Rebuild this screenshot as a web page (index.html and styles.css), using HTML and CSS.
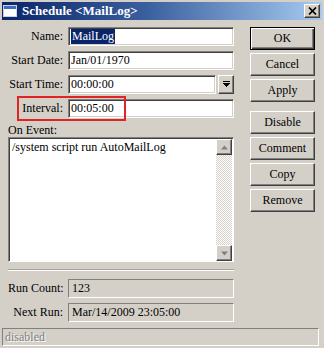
FILE: index.html
```html
<!DOCTYPE html>
<html lang="en">
<head>
    <meta charset="UTF-8">
    <meta name="viewport" content="width=device-width, initial-scale=1.0">
    <title>Schedule</title>
    <link rel="stylesheet" href="styles.css">
</head>
<body>
    <div class="window">
        <div class="titlebar">
            <svg class="title-icon" width="14" height="12" viewBox="0 0 14 12">
                <rect x="0.5" y="0.5" width="13" height="11" fill="#fff" stroke="#c8d4e4"/>
                <rect x="1" y="1" width="12" height="3" fill="#3d6cc0"/>
            </svg>
            <span class="title">Schedule &lt;MailLog&gt;</span>
            <div class="close-btn">
                <svg width="9" height="8" viewBox="0 0 9 8">
                    <path d="M1 0.5 L8 7.5 M8 0.5 L1 7.5" stroke="#000" stroke-width="1.7"/>
                </svg>
            </div>
        </div>

        <div class="main">
            <div class="form">
                <div class="fields">
                    <div class="label">Name:</div>
                    <div class="field"><span class="selected">MailLog</span></div>
                    <div class="label">Start Date:</div>
                    <div class="field">Jan/01/1970</div>
                    <div class="label">Start Time:</div>
                    <div class="combo">
                        <div class="field">00:00:00</div>
                        <div class="drop-btn">
                            <svg width="7" height="7" viewBox="0 0 7 7" shape-rendering="crispEdges">
                                <rect x="0" y="0" width="7" height="1"/>
                                <rect x="0" y="2" width="7" height="1"/>
                                <rect x="1" y="3" width="5" height="1"/>
                                <rect x="2" y="4" width="3" height="1"/>
                                <rect x="3" y="5" width="1" height="1"/>
                            </svg>
                        </div>
                    </div>
                    <div class="label">Interval:</div>
                    <div class="field">00:05:00</div>
                </div>

                <div class="event-label">On Event:</div>
                <div class="event-box">
                    <div class="event-text">/system script run AutoMailLog</div>
                    <div class="scrollbar">
                        <div class="sb-btn">
                            <svg width="7" height="5" viewBox="0 0 7 5"><polygon points="3.5,0.5 7,4.5 0,4.5" fill="#808080"/></svg>
                        </div>
                        <div class="sb-track"></div>
                        <div class="sb-btn">
                            <svg width="7" height="5" viewBox="0 0 7 5"><polygon points="0,0.5 7,0.5 3.5,4.5" fill="#808080"/></svg>
                        </div>
                    </div>
                </div>

                <div class="separator"></div>

                <div class="fields status-fields">
                    <div class="label">Run Count:</div>
                    <div class="field readonly">123</div>
                    <div class="label">Next Run:</div>
                    <div class="field readonly">Mar/14/2009 23:05:00</div>
                </div>

                <div class="highlight"></div>
            </div>

            <div class="buttons">
                <div class="btn default">OK</div>
                <div class="btn">Cancel</div>
                <div class="btn">Apply</div>
                <div class="btn spaced">Disable</div>
                <div class="btn">Comment</div>
                <div class="btn">Copy</div>
                <div class="btn">Remove</div>
            </div>
        </div>

        <div class="statusbar">disabled</div>
    </div>
</body>
</html>
```

FILE: styles.css
```css
* { box-sizing: border-box; }
body { margin: 0; padding: 0; background: #d4d0c8; font-family: "Liberation Serif", "Times New Roman", serif; font-size: 12px; color: #000; }

.window { width: 324px; height: 348px; padding: 2px; background: #d4d0c8; display: flex; flex-direction: column; overflow: hidden; }

.titlebar { height: 18px; display: flex; align-items: center; padding: 0 2px 0 1px; background: linear-gradient(to right, #0a246a 0%, #3a5f9e 45%, #a6caf0 100%); color: #fff; }
.title-icon { margin-right: 5px; }
.title { flex: 1; font-weight: bold; font-size: 13px; line-height: 18px; }
.close-btn { width: 16px; height: 14px; display: flex; align-items: center; justify-content: center; background: #d4d0c8; border: 1px solid; border-color: #fff #404040 #404040 #fff; box-shadow: inset -1px -1px #808080; }

.main { display: flex; padding: 7px 7px 0 6px; }
.form { width: 226px; position: relative; }

.fields { display: grid; grid-template-columns: 55px 166px; column-gap: 5px; row-gap: 5px; align-items: center; }
.label { text-align: right; white-space: nowrap; }
.field { height: 19px; line-height: 17px; padding-left: 2px; background: #fff; white-space: nowrap; overflow: hidden; border: 1px solid; border-color: #808080 #fff #fff #808080; box-shadow: inset 1px 1px #404040, inset -1px -1px #d4d0c8; }
.field.readonly { background: #d4d0c8; box-shadow: none; padding-left: 3px; }
.selected { display: inline-block; line-height: 15px; padding: 0 1px; background: #0a246a; color: #fff; }

.combo { display: flex; gap: 2px; }
.combo .field { flex: 1; }
.drop-btn { width: 16px; height: 19px; display: flex; align-items: center; justify-content: center; border: 1px solid; border-color: #fff #404040 #404040 #fff; box-shadow: inset -1px -1px #808080; }

.event-label { margin-top: 5px; height: 14px; line-height: 14px; }
.event-box { height: 125px; display: flex; background: #fff; border: 1px solid; border-color: #808080 #fff #fff #808080; box-shadow: inset 1px 1px #404040; padding: 1px 1px 0 1px; }
.event-text { flex: 1; padding: 1px 2px; line-height: 14px; white-space: nowrap; overflow: hidden; }
.scrollbar { width: 16px; display: flex; flex-direction: column; }
.sb-btn { height: 16px; display: flex; align-items: center; justify-content: center; background: #d4d0c8; border: 1px solid; border-color: #fff #404040 #404040 #fff; box-shadow: inset -1px -1px #808080; }
.sb-track { flex: 1; background: repeating-conic-gradient(#d4d0c8 0 25%, #fff 0 50%) 0 0 / 2px 2px; }

.separator { margin-top: 7px; height: 2px; border-top: 1px solid #a8a49c; border-bottom: 1px solid #fff; }
.status-fields { margin-top: 8px; }

.highlight { position: absolute; left: 9px; top: 69px; width: 109px; height: 25px; border: 2px solid #e02424; }

.buttons { width: 65px; margin-left: 16px; display: flex; flex-direction: column; gap: 3px; }
.btn { height: 23px; line-height: 21px; text-align: center; border: 1px solid; border-color: #fff #404040 #404040 #fff; box-shadow: inset -1px -1px #808080; }
.btn.default { border-color: #000; box-shadow: inset 1px 1px #fff, inset -1px -1px #404040, inset -2px -2px #808080; }
.btn.spaced { margin-top: 6px; }

.statusbar { margin-top: 6px; width: 317px; height: 18px; line-height: 16px; padding-left: 2px; color: #808080; text-shadow: 1px 1px #fff; border: 1px solid; border-color: #808080 #fff #fff #808080; }
```
